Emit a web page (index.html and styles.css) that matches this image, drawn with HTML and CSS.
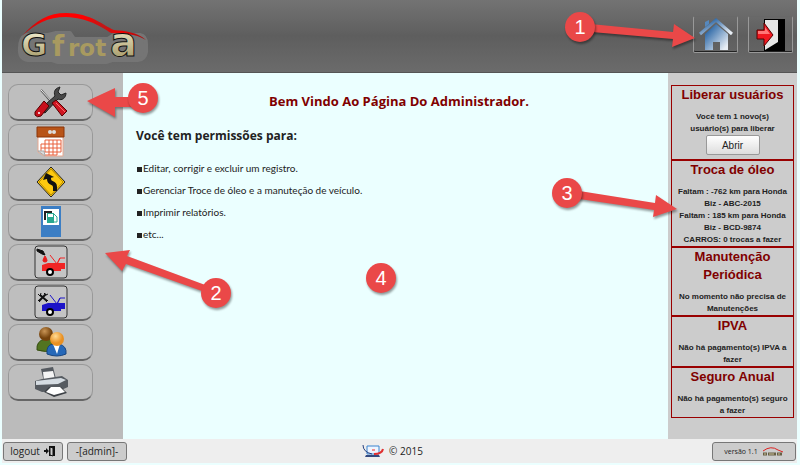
FILE: index.html
```html
<!DOCTYPE html>
<html lang="pt-br">

<head>
    <meta charset="UTF-8">
    <meta name="viewport" content="width=device-width, initial-scale=1.0">
    <title>GFrota - Administrador</title>
    <link rel="stylesheet" href="styles.css">
</head>

<body>
    <header class="topo">
        <a href="#" class="logo" aria-label="GFrota">
            <svg width="136" height="54" viewBox="0 0 136 54">
                <defs>
                    <linearGradient id="ouro" x1="0" y1="0" x2="0" y2="1">
                        <stop offset="0" stop-color="#fffbe0" />
                        <stop offset="1" stop-color="#9a8d58" />
                    </linearGradient>
                    <linearGradient id="teto" x1="0" y1="0" x2="1" y2="0">
                        <stop offset="0" stop-color="#b01010" />
                        <stop offset="0.2" stop-color="#ff0000" />
                        <stop offset="0.5" stop-color="#ff0000" />
                        <stop offset="0.65" stop-color="#c01818" />
                        <stop offset="0.8" stop-color="#f00000" />
                        <stop offset="1" stop-color="#a01010" />
                    </linearGradient>
                </defs>
                <path d="M10 22h22l8-2h14l4 6h34l6-4h26q6 1 6 9v8q-1 7-8 8H96l-6 2H42l-6-2H12Q3 46 4 35q0-10 6-13z" fill="#757575" stroke="#757575" stroke-width="4" stroke-linejoin="round" />
                <path d="M6 23C20 7 33 0 50 0c25 0 38 13 48 17 11 1 23 2 32 10-12-7-22-6-35-7C84 13 72 5 50 4 32 4 19 11 6 23z" fill="url(#teto)" />
                <text x="5" y="43" class="letra letra-g">G</text>
                <text x="36" y="43" class="letra letra-f">f</text>
                <text x="52" y="43" class="letra letra-m">rot</text>
                <text x="94" y="43" class="letra letra-a">a</text>
            </svg>
        </a>
        <nav class="atalhos">
            <button type="button" class="atalho" aria-label="Início">
                <svg width="34" height="34" viewBox="0 0 34 34">
                    <defs>
                        <linearGradient id="casa" x1="0" y1="0" x2="1" y2="1">
                            <stop offset="0.15" stop-color="#2864a4" />
                            <stop offset="0.9" stop-color="#e8eef5" />
                        </linearGradient>
                    </defs>
                    <path d="M6 9V4l4-2v4z" fill="#5688bd" />
                    <path d="M6 16L17 6l12 10v16h-8v-8h-7v8H6z" fill="url(#casa)" />
                    <path d="M1 16L17 2l16 14" fill="none" stroke="url(#casa)" stroke-width="3" />
                </svg>
            </button>
            <button type="button" class="atalho" aria-label="Sair">
                <svg width="32" height="34" viewBox="0 0 32 34">
                    <path d="M9 1h21v32H9z" fill="#000" />
                    <path d="M10 2h13v22L10 32z" fill="#e6e6e6" />
                    <path d="M2 12h7V5l9 12-9 11v-7H2z" fill="#f01820" stroke="#500" />
                    <path d="M3 13h7V9l5 7H3z" fill="#ff7777" />
                </svg>
            </button>
        </nav>
    </header>

    <div class="corpo">
        <nav class="menu">
            <button type="button" class="item" aria-label="Ferramentas">
                <svg width="36" height="32" viewBox="0 0 36 32">
                    <path d="M8 4l13 15" stroke="#555" stroke-width="2" />
                    <path d="M8 4l12 13" stroke="#eee" />
                    <path d="M6 24L22 10c-2-5 1-8 5-9l-2 5 3 3 5-2c0 5-4 8-8 6L12 27z" fill="#484848" stroke="#222" />
                    <path d="M2 26l9-11 5 5-8 10q-4 2-6-1z" fill="#c8101c" stroke="#500" />
                    <circle cx="6" cy="27" r="1" fill="#fff" />
                    <path d="M19 17l4-3 11 11-5 5z" fill="#d01622" stroke="#500" />
                    <path d="M23 17l9 9" stroke="#ff6a6a" />
                </svg>
            </button>
            <button type="button" class="item" aria-label="Calendário">
                <svg width="30" height="32" viewBox="0 0 30 32">
                    <path d="M2 8h25v22H8l-6-4z" fill="#fff" stroke="#e8a890" />
                    <path d="M1 1h27v10H1z" fill="#b85418" stroke="#8a3508" />
                    <circle cx="14" cy="6" r="2" fill="#ddd" />
                    <circle cx="18" cy="6" r="2" fill="#ddd" />
                    <path d="M9 14h16v12H5v-8h20M5 22h20M9 14v12M13 14v15M17 14v15M21 14v15M9 29h12" fill="none" stroke="#e8603c" />
                    <path d="M2 25l6 0 1 5z" fill="#ddd" stroke="#aaa" />
                </svg>
            </button>
            <button type="button" class="item" aria-label="Rotas">
                <svg width="30" height="32" viewBox="0 0 30 32">
                    <path d="M15 1l14 15-14 15L1 16z" fill="#fdc910" stroke="#222" stroke-linejoin="round" />
                    <path d="M15 3l12 13-12 13L3 16z" fill="none" stroke="#b98c00" />
                    <path d="M19 25v-4q0-3-3-4t-3-4v-2" fill="none" stroke="#111" stroke-width="4" />
                    <path d="M7 14l3-7 8 4z" fill="#111" />
                </svg>
            </button>
            <button type="button" class="item" aria-label="Abastecimento">
                <svg width="20" height="32" viewBox="0 0 20 32">
                    <path d="M0 0h20v31H0z" fill="#3c7ec4" />
                    <path d="M2 3h16v16H2z" fill="#fff" />
                    <path d="M3 5h8v2H5v7H3z" fill="#222" />
                    <path d="M6 7h7v10H6z" fill="#28a890" />
                    <path d="M7 8h5v3H7z" fill="#fff" />
                    <path d="M13 8l3 3v5h-3" fill="none" stroke="#28a890" />
                </svg>
            </button>
            <button type="button" class="item" aria-label="Troca de óleo">
                <svg width="34" height="34" viewBox="0 0 34 34">
                    <rect x="1" y="1" width="32" height="32" rx="3" fill="#c4c4c4" stroke="#333" />
                    <path d="M3 4l6 2 2 4-3-1-5-3z" fill="#111" stroke="#111" />
                    <path d="M11 11q4 6 0 6t0-6z" fill="#e81c1c" stroke="#e81c1c" />
                    <path d="M8 20l6-2h17v6h-4v2H8z" fill="#f02424" />
                    <path d="M16 10l7 9 3-6h5M23 19l3-6" fill="none" stroke="#f02424" />
                    <circle cx="16" cy="27" r="3" fill="#fff" stroke="#000" stroke-width="2" />
                </svg>
            </button>
            <button type="button" class="item" aria-label="Manutenção">
                <svg width="34" height="34" viewBox="0 0 34 34">
                    <rect x="1" y="1" width="32" height="32" rx="3" fill="#c4c4c4" stroke="#333" />
                    <path d="M5 16l7-7M6 10l7 6" stroke="#111" stroke-width="2" />
                    <path d="M4 9l2 2 1-3M10 8l2 2 2-1M4 15l2 2M12 17l2-2" fill="none" stroke="#111" />
                    <path d="M8 20l6-2h17v6h-4v2H8z" fill="#1c14c8" />
                    <path d="M16 10l7 9 3-6h5M23 19l3-6" fill="none" stroke="#1c14c8" />
                    <circle cx="16" cy="27" r="3" fill="#fff" stroke="#000" stroke-width="2" />
                </svg>
            </button>
            <button type="button" class="item" aria-label="Usuários">
                <svg width="32" height="32" viewBox="0 0 32 32">
                    <defs>
                        <radialGradient id="rosto1" cx="0.4" cy="0.3">
                            <stop offset="0" stop-color="#c99556" />
                            <stop offset="1" stop-color="#74420c" />
                        </radialGradient>
                        <radialGradient id="rosto2" cx="0.4" cy="0.3">
                            <stop offset="0" stop-color="#ffdc96" />
                            <stop offset="1" stop-color="#e99022" />
                        </radialGradient>
                    </defs>
                    <path d="M2 24q-1-9 8-11h6l3 11q-8 3-17 0z" fill="#527420" stroke="#354d10" />
                    <circle cx="11" cy="8" r="7" fill="url(#rosto1)" />
                    <path d="M12 28q-1-9 6-10h6q8 2 7 10-9 4-19 0z" fill="#2668b8" stroke="#164480" />
                    <path d="M18 18h7l-3 10z" fill="#fff" />
                    <circle cx="22" cy="13" r="7" fill="url(#rosto2)" />
                </svg>
            </button>
            <button type="button" class="item" aria-label="Imprimir">
                <svg width="36" height="32" viewBox="0 0 36 32">
                    <path d="M8 3l12-2 3 12-12 3z" fill="#555a60" />
                    <path d="M10 6l10-1 2 8-11 2z" fill="#f4f4f4" />
                    <path d="M2 15l7-2 20-3 6 4v7l-9 4-17 1-7-3z" fill="#565b61" />
                    <path d="M3 15l25-3 5 2-8 4-22 1z" fill="#d5dce2" />
                    <path d="M11 26l5-5h12l6 6-13 4z" fill="#3c4045" />
                    <path d="M13 26l5-5h9l5 5-11 3z" fill="#fff" />
                </svg>
            </button>
        </nav>

        <main class="conteudo">
            <h1>Bem Vindo Ao Página Do Administrador.</h1>
            <h2>Você tem permissões para:</h2>
            <ul class="permissoes">
                <li>Editar, corrigir e excluir um registro.</li>
                <li>Gerenciar Troce de óleo e a manuteção de veículo.</li>
                <li>Imprimir relatórios.</li>
                <li>etc...</li>
            </ul>
        </main>

        <aside class="avisos">
            <section class="aviso">
                <h3>Liberar usuários</h3>
                <p>Você tem 1 novo(s)<br>usuário(s) para liberar</p>
                <button type="button" class="abrir">Abrir</button>
            </section>
            <section class="aviso">
                <h3>Troca de óleo</h3>
                <p>Faltam : -762 km para Honda<br>Biz - ABC-2015</p>
                <p>Faltam : 185 km para Honda<br>Biz - BCD-9874</p>
                <p>CARROS: 0 trocas a fazer</p>
            </section>
            <section class="aviso">
                <h3>Manutenção<br>Periódica</h3>
                <p>No momento não precisa de<br>Manutenções</p>
            </section>
            <section class="aviso">
                <h3>IPVA</h3>
                <p>Não há pagamento(s) IPVA a<br>fazer</p>
            </section>
            <section class="aviso">
                <h3>Seguro Anual</h3>
                <p>Não há pagamento(s) seguro<br>a fazer</p>
            </section>
        </aside>
    </div>

    <footer class="rodape">
        <div class="sessao">
            <button type="button" class="botao">logout
                <svg width="12" height="12" viewBox="0 0 12 12">
                    <path d="M5 1h6v10H5z" fill="#111" />
                    <path d="M6 2l3 1v8L6 10z" fill="#ccc" stroke="#111" />
                    <path d="M0 5h2V3l3 3-3 3V7H0z" fill="#111" />
                </svg>
            </button>
            <button type="button" class="botao">-[admin]-</button>
        </div>
        <div class="direitos">
            <svg width="22" height="14" viewBox="0 0 22 14">
                <path d="M5 2h12v8H5z" fill="#eef5ff" stroke="#3b84d0" />
                <path d="M10 5h3v2h-3z" fill="#f09090" />
                <path d="M4 11h13l1 2H3z" fill="#334a80" />
                <path d="M1 1q0 7 9 9" fill="none" stroke="#26407e" />
                <path d="M12 10q8 0 9-5" fill="none" stroke="#e03030" stroke-width="2" />
            </svg>
            <span>© 2015</span>
        </div>
        <div class="lado-versao">
            <button type="button" class="botao versao">versão 1.1
                <svg width="22" height="9" viewBox="0 0 22 9">
                    <path d="M1 4q8-6 15-1l5 2" fill="none" stroke="#d22" />
                    <path d="M1 7h4M6 7h8M15 7h5" stroke="#665f44" stroke-width="3" />
                    <path d="M2 7h2M7 7h5M16 7h2" stroke="#c9c09a" />
                </svg>
            </button>
        </div>
    </footer>

    <!-- marcações numeradas do manual -->
    <svg class="marcas" width="800" height="465" viewBox="0 0 800 465">
        <g class="seta">
            <path d="M580 23l93 9 1-8 21 14-23 9 1-8-93-8z" />
            <path d="M216 289l-89-33 3-6-25 3 17 18 4-7 90 32z" />
            <path d="M567 189l88 14 1-8 21 14-24 8 1-7-88-13z" />
            <path d="M143 97h-28v-9l-28 13 28 16v-10h28z" />
        </g>
        <g class="bola">
            <circle cx="580" cy="27" r="15" />
            <circle cx="216" cy="293" r="15" />
            <circle cx="567" cy="193" r="15" />
            <circle cx="381" cy="278" r="15" />
            <circle cx="143" cy="98" r="15" />
        </g>
        <g class="numero">
            <text x="580" y="34">1</text>
            <text x="216" y="300">2</text>
            <text x="567" y="200">3</text>
            <text x="381" y="285">4</text>
            <text x="143" y="105">5</text>
        </g>
    </svg>
</body>

</html>
```
FILE: styles.css
```css
* {
    box-sizing: border-box;
}

body {
    font-family: "Open Sans", sans-serif;
    background-color: #ebffff;
    color: #222222;
    display: flex;
    flex-direction: column;
    min-height: 100vh;
    margin: 0;
    padding: 0 3px 2px 2px;
}

h1,
h2,
h3,
p,
ul {
    margin: 0;
    padding: 0;
}

button {
    font-family: inherit;
    color: inherit;
    padding: 0;
    cursor: pointer;
}

svg {
    display: block;
}

.topo {
    display: flex;
    justify-content: space-between;
    align-items: flex-start;
    height: 73px;
    padding: 13px 4px 0 14px;
    background: linear-gradient(#737373, #5e5e5e 50%, #6b6b6b);
    border-bottom: 1px solid #555555;
}

.letra {
    font-family: "DejaVu Sans", sans-serif;
    font-weight: bold;
    fill: #a89a60;
}

.letra-g,
.letra-a {
    fill: url(#ouro);
    stroke: #111111;
}

.letra-g {
    font-size: 32px;
}

.letra-f {
    font-size: 28px;
}

.letra-m {
    font-size: 23px;
}

.letra-a {
    font-size: 40px;
}

.atalhos {
    display: flex;
    gap: 10px;
    padding-top: 3px;
}

.atalho {
    display: flex;
    justify-content: center;
    align-items: center;
    width: 45px;
    height: 37px;
    background: none;
    border: 1px solid #999999;
    border-top-color: #686868;
    border-radius: 2px;
    box-shadow: inset 0 -1px 0 #222222;
}

.corpo {
    display: flex;
    flex: 1;
}

.menu {
    display: flex;
    flex-direction: column;
    gap: 3px;
    width: 121px;
    padding: 11px 6px;
    background-color: #bbbbbb;
}

.item {
    display: flex;
    justify-content: center;
    align-items: center;
    width: 85px;
    height: 37px;
    background-color: #bebebe;
    border: 1px solid #999999;
    border-bottom: 2px solid #666666;
    border-radius: 10px;
}

.conteudo {
    flex: 1;
    padding: 18px 13px;
}

h1 {
    font-size: 13px;
    line-height: 20px;
    text-align: center;
    color: #800000;
    padding-left: 7px;
}

h2 {
    font-size: 12px;
    line-height: 20px;
    margin-top: 15px;
}

.permissoes {
    list-style: none;
    font-family: Lato, sans-serif;
    font-size: 10px;
    line-height: 22px;
    margin-top: 11px;
}

.permissoes li::before {
    content: "";
    display: inline-block;
    width: 5px;
    height: 5px;
    margin: 0 1px;
    background-color: #222222;
}

.avisos {
    width: 129px;
    padding: 12px 3px;
    background-color: #cccccc;
    font-family: "Liberation Sans", sans-serif;
    text-align: center;
}

.aviso {
    border: 1px solid #990000;
}

.aviso h3 {
    font-size: 13px;
    line-height: 18px;
    color: #800000;
    margin-bottom: 7px;
}

.aviso p {
    font-size: 8px;
    font-weight: bold;
    line-height: 12px;
}

.abrir {
    display: block;
    width: 54px;
    height: 20px;
    margin: 0 auto 4px;
    font-size: 10px;
    background: linear-gradient(#ffffff, #dddddd);
    border: 1px solid #999999;
    border-radius: 2px;
}

.rodape {
    display: grid;
    grid-template-columns: 1fr auto 1fr;
    align-items: center;
    height: 24px;
    padding: 0 1px;
    background-color: #eeeeee;
}

.sessao {
    display: flex;
    gap: 4px;
}

.botao {
    display: flex;
    justify-content: center;
    align-items: center;
    gap: 4px;
    width: 60px;
    height: 19px;
    font-size: 10px;
    background-color: #cccccc;
    border: 1px solid #777777;
    border-radius: 3px;
}

.direitos {
    display: flex;
    align-items: center;
    gap: 5px;
    padding-right: 14px;
    font-size: 10px;
}

.lado-versao {
    display: flex;
    justify-content: flex-end;
}

.versao {
    width: 84px;
    font-size: 7px;
}

.marcas {
    position: absolute;
    top: 0;
    left: 0;
    pointer-events: none;
}

.seta,
.bola {
    fill: #ea4848;
    filter: drop-shadow(1px 2px 1px rgba(0, 0, 0, 0.4));
}

.numero {
    font-family: "Liberation Sans", sans-serif;
    font-size: 20px;
    fill: #ffffff;
    text-anchor: middle;
}
```
